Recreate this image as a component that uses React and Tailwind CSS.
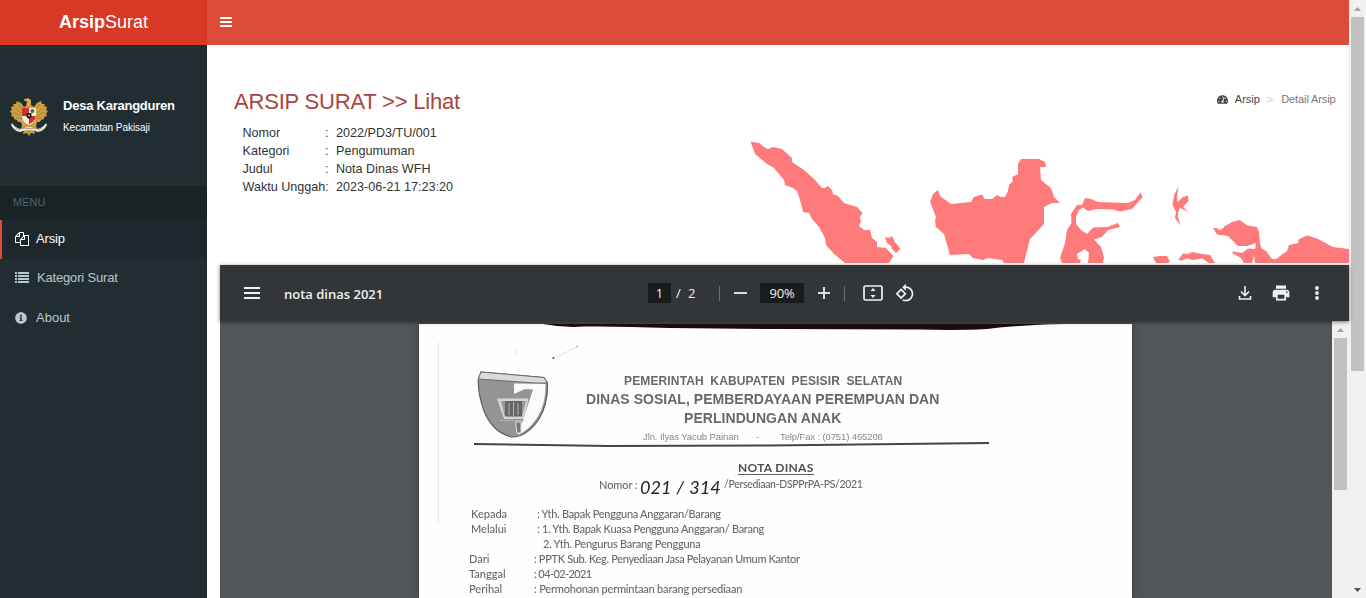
import React from "react";
import { FaTachometerAlt, FaInfoCircle } from "react-icons/fa";

function Bars() {
  return (
    <svg className="h-[10px] w-[12px] -translate-y-px" viewBox="0 0 12 10" fill="currentColor">
      <rect y="0" width="12" height="2" rx=".4" />
      <rect y="4" width="12" height="2" rx=".4" />
      <rect y="8" width="12" height="2" rx=".4" />
    </svg>
  );
}

function Files() {
  return (
    <svg className="size-[14px]" viewBox="0 0 1792 1792" fill="currentColor">
      <path d="M1696 384q40 0 68 28t28 68v1216q0 40-28 68t-68 28h-960q-40 0-68-28t-28-68v-288h-544q-40 0-68-28t-28-68v-672q0-40 20-88t48-76l408-408q28-28 76-48t88-20h416q40 0 68 28t28 68v328q68-40 128-40h416zm-544 213l-299 299h299v-299zm-640-384l-299 299h299v-299zm196 647l316-316v-416h-384v416q0 40-28 68t-68 28h-416v640h512v-256q0-40 20-88t48-76zm956 804v-1152h-384v416q0 40-28 68t-68 28h-416v640h896z" />
    </svg>
  );
}

function ListIcon() {
  return (
    <svg className="h-[11px] w-[14px]" viewBox="0 0 14 11" fill="currentColor">
      {[0, 3, 6, 9].map((y) => (
        <g key={y}>
          <rect x="0" y={y} width="2" height="2" />
          <rect x="3" y={y} width="11" height="2" />
        </g>
      ))}
    </svg>
  );
}

function Garuda() {
  return (
    <svg className="h-[40px] w-[40px] shrink-0" viewBox="0 0 40 40">
      <path d="M15 10 L12 6 L8 4 L7 7 L4 7 L5 9 L2 10 L3 13 L1 14 L3 17 L2 19 L5 20 L5 22 L8 23 L9 25 L12 25 L13 29 L12 33 L15 33 L14 37 L18 36 L20 39 L22 36 L26 37 L25 33 L28 33 L27 29 L28 25 L31 25 L32 23 L35 22 L35 20 L38 19 L37 17 L39 14 L37 13 L38 10 L35 9 L36 7 L33 7 L32 4 L28 6 L25 10 L22 8 L22 3 L19 1 L15 3 L18 5 L17 9 Z" fill="#cda043" />
      <path d="M5 10 L12 16 M4 15 L12 19 M7 21 L13 22 M9 7 L14 13 M35 10 L28 16 M36 15 L28 19 M33 21 L27 22 M31 7 L26 13 M20 29 L20 37 M17 29 L16 35 M23 29 L24 35" stroke="#8a6128" strokeWidth=".5" />
      <path d="M15 3 L19 2 L21 5 L19 9" fill="none" stroke="#e9bd58" strokeWidth="1" />
      <path d="M13 11 H27 V20 Q26 26 20 28 Q14 26 13 20 Z" fill="#f0e9e0" />
      <path d="M13 11 H20 V19 H13 Z M20 19 H27 Q26 25 20 27 Z" fill="#d22f2b" />
      <path d="M20 11 H27 V19 H20 Z" fill="#eee" />
      <circle cx="23.5" cy="14" r="2" fill="#49734a" />
      <path d="M17.500 16 H22.500 V20 L20 22 L17.500 20 Z" fill="#1c1714" />
      <circle cx="20" cy="18.500" r=".9" fill="#e3b94c" />
      <path d="M3 26 Q6 31 12 32 Q20 28 28 32 Q34 31 37 26 L38 28 Q35 34 29 35 Q20 31 11 35 Q5 34 2 28 Z" fill="#ebe6e2" />
      <path d="M7 31 L11 33 M16 31.500 H24 M29 33 L33 31" stroke="#777" strokeWidth=".6" />
      <path d="M12 31.500 L16 30.500 M24 30.500 L28 31.500" stroke="#bd8f38" strokeWidth="1.500" />
    </svg>
  );
}

function IslandMap() {
  return (
    <svg className="absolute left-[543px] top-[85px] h-[133px] w-[599px]" viewBox="750 130 599 133" fill="#ff7b7b">
      <path d="M750.5 141.5 L759 143 L764 147 L768 149 L773 147 L782 149 L792 158 L792 162 L804 170 L815 180 L822 188 L825 188 L828 186 L832 190 L833 194 L838 196 L844 203 L857 207 L862.500 213 L860 217 L861 222 L859 226 L864 230 L870 230 L872 238 L877 242 L877 247 L886 248 L893.500 256 L889 263 L845 263 L834 254 L826 245 L825 238 L819 227 L812 219 L809 213 L803 212 L801 203 L797 191 L793 188 L785 185 L784 180 L774 168 L767 164 L755 154 Z" />
      <path d="M885 237 L889 238 L892 236 L895 242 L900.500 249 L896 253 L892 249 L891 246 L887 243 Z" />
      <path d="M930 202 L933 194 L938 190 L940 196 L951 204 L971 202 L974 197 L980 195 L983 195 L984 199 L992 199 L997 195 L1001 197 L1005 197 L1008 191 L1009 185 L1013 181 L1012 177 L1018 174 L1018 164 L1021 159 L1039 159 L1045 162 L1046 167 L1040 167 L1041 180 L1051 188 L1054 197 L1060 203 L1052 203 L1044 207 L1044 224 L1030 239 L1024 263 L1004 263 L1002 260 L988 258 L983 260 L973 258 L969 254 L950 255 L944 234 L936 227 L935 221 L936 217 Z" />
      <path d="M1062 263 L1060 258 L1065 243 L1067 230 L1071.500 223 L1071 214 L1077 205 L1082 205 L1085 198 L1091 199 L1098 202 L1128 203 L1135 200 L1140.500 192.500 L1142.700 197 L1132 209 L1120 211.500 L1113 209.500 L1097 209 L1088 211 L1083 207.500 L1079 210 L1076 217 L1076 224 L1081 230 L1087 234 L1093 227.500 L1107 227 L1118 223 L1120 227 L1108 230 L1102 237 L1094 239.500 L1101 247 L1104 257 L1103 263 L1088 263 L1089 253 L1085 249 L1077 254 L1078 259 L1081 260 L1080 263 Z" />
      <path d="M1178.500 186.500 L1174 195 L1172.500 205 L1176 212 L1175 218 L1180.500 225.500 L1178 217 L1178 212 L1180 208 L1188.500 212 L1183 207 L1188.500 201 L1188 195.500 L1183 197 L1177.500 202 L1177 197 Z" />
      <path d="M1213 228 L1217 228 L1219 230 L1222 229 L1225 226 L1232 222 L1240 220 L1247 225.500 L1257 227 L1259 232 L1260 244 L1262 249 L1266 251 L1272 259 L1276 259 L1287 251 L1289 245 L1298 243 L1299 239 L1307 235.500 L1317 238.500 L1333 247 L1349 249 V263 H1255 L1254 255 L1252 263 H1244 L1241 258 L1232 253 L1233 251.500 L1242 253 L1248 248.500 L1255 249 L1256 243 L1247 246 L1238 246 L1228 236 L1217 234.500 Z" />
      <path d="M1153 257 L1160 256 L1167 256 L1170 262 L1167 263 H1156 Z M1178 260 L1183 253.500 L1188 254 L1192 252 L1202 254 L1210 255 L1215 263 H1209 L1202 258.500 L1193 260 L1187 258.500 L1182 260.500 Z" />
    </svg>
  );
}

function Crest() {
  return (
    <svg className="absolute left-[58px] top-[46px] h-[69px] w-[74px] blur-[0.3px]" viewBox="0 0 74 69">
      <path d="M4 2 L67 7.500 L70.500 13 Q71 34 62 49 Q50 67 35 67 Q16 63 7 41 Q1 24 1.300 9.500 Z" fill="#959393" stroke="#5d5b5b" strokeWidth="1.200" />
      <path d="M4 2 L67 7.500 L70.500 13 L59 13 L1.300 9 Z" fill="#dcdada" stroke="#6a6868" strokeWidth=".9" />
      <path d="M37 13.500 L68.500 14 Q69 34 60 48 Q52 60 41 65 L46 50 L56 19.500 L48 19 L37 24 Z" fill="#fafafa" />
      <path d="M20 28.500 H51.500 L47 49 H27 Z" fill="#d6d4d4" />
      <path d="M24 31 H49 L45 47 H28 Z" fill="#999" />
      <path d="M28 31 H45 V46 H28 Z" fill="#666" />
      <path d="M23 50.500 H47 M32 33 V45 M36.500 32 V46 M41 33 V45" stroke="#b5b3b3" strokeWidth="1" />
      <path d="M38.500 52 H44 V63 H40 Z" fill="#777" stroke="#e5e5e5" />
    </svg>
  );
}

function ScanLine({ className, children }) {
  return <div className={"flex whitespace-pre " + className}>{children}</div>;
}

function Scan() {
  return (
    <div className="relative ml-[199px] h-[274px] w-[713px] overflow-hidden bg-[#fefefe] text-[#6c6767] shadow-[0_0_6px_#2228]">
      <svg className="absolute left-0 top-0 h-[274px] w-[713px]" viewBox="0 0 713 274">
        <path d="M124 0 H645 Q600 1 568 5 Q540 6.500 500 5.500 L356 5 L250 4 Q200 2 165 2.500 Q145 4 124 0 Z" fill="#21090d" />
        <path d="M19.500 18 V200" stroke="#eee6e8" strokeWidth="1" />
        <path d="M137 33 L158 23" stroke="#e4d8d8" strokeWidth=".8" />
        <circle cx="134.500" cy="34" r="1" fill="#444" />
        <circle cx="158" cy="22.500" r=".8" fill="#a88" />
        <circle cx="97" cy="28" r=".7" fill="#cbb" />
        <path d="M55 120 L190 122 L350 121.500 L570 119" fill="none" stroke="#494346" strokeWidth="2" />
      </svg>
      <Crest />
      <div className="flex flex-col font-['Liberation_Sans',sans-serif] blur-[0.35px]">
        <ScanLine className="mt-[49px] h-[17px] pl-[205px] text-[12px] font-bold leading-[17px] tracking-[0.14px] [word-spacing:3px]">
          <span>PEMERINTAH KABUPATEN PESISIR SELATAN</span>
        </ScanLine>
        <ScanLine className="h-[19px] pl-[167px] text-[14px] font-bold leading-[19px] tracking-[0.03px]">
          <span>DINAS SOSIAL, PEMBERDAYAAN PEREMPUAN DAN</span>
        </ScanLine>
        <ScanLine className="h-[19px] pl-[265px] text-[14px] font-bold leading-[19px] tracking-[0.05px]">
          <span>PERLINDUNGAN ANAK</span>
        </ScanLine>
        <ScanLine className="h-[17px] pl-[224px] text-[9.5px] leading-[17px] text-[#888]">
          <span className="w-[113px] tracking-[-0.1px]">Jln. Ilyas Yacub Painan</span>
          <span className="w-[24px]">-</span>
          <span className="tracking-[-0.12px]">Telp/Fax : (0751) 465208</span>
        </ScanLine>
      </div>
      <div className="flex flex-col font-[Lato,sans-serif] text-[11px] font-medium blur-[0.3px]">
        <ScanLine className="mt-[15px] h-[18px] pl-[319px] text-[12px] font-bold leading-[15px] tracking-[0.28px] text-[#524d4d]">
          <span className="h-[15px] border-b border-[#625d5d]">NOTA DINAS</span>
        </ScanLine>
        <ScanLine className="h-[28px] pl-[180px] leading-[14px]">
          <span className="w-[41px] tracking-[-0.1px]">Nomor :</span>
          <span className="w-[84px] text-[18px] font-normal italic leading-[19px] text-[#222] [word-spacing:1px]">021 / 314</span>
          <span className="text-[10.5px] leading-[12px] tracking-[-0.32px]">/Persediaan-DSPPrPA-PS/2021</span>
        </ScanLine>
        <ScanLine className="h-[15px] pl-[52px] leading-[15px]"><span className="w-[66px]">Kepada</span><span className="tracking-[-0.3px]">: Yth. Bapak Pengguna Anggaran/Barang</span></ScanLine>
        <ScanLine className="h-[15px] pl-[52px] leading-[15px]"><span className="w-[66px]">Melalui</span><span className="tracking-[-0.3px]">: 1. Yth. Bapak Kuasa Pengguna Anggaran/ Barang</span></ScanLine>
        <ScanLine className="h-[15px] pl-[124px] leading-[15px]"><span className="tracking-[-0.25px]">2. Yth. Pengurus Barang Pengguna</span></ScanLine>
        <ScanLine className="h-[15px] pl-[50px] leading-[15px]"><span className="w-[65px]">Dari</span><span className="tracking-[-0.34px]">: PPTK Sub. Keg. Penyediaan Jasa Pelayanan Umum Kantor</span></ScanLine>
        <ScanLine className="h-[15px] pl-[50px] leading-[15px]"><span className="w-[65px]">Tanggal</span><span className="tracking-[-0.6px]">: 04-02-2021</span></ScanLine>
        <ScanLine className="h-[15px] pl-[50px] leading-[15px]"><span className="w-[65px]">Perihal</span><span className="tracking-[-0.2px]">: Permohonan permintaan barang persediaan</span></ScanLine>
      </div>
    </div>
  );
}

function PdfToolbar() {
  return (
    <div className="relative z-10 flex h-[56px] shrink-0 items-center bg-[#323639] font-['Open_Sans',sans-serif] text-[13px] text-[#f1f1f1] shadow-[0_1px_4px_#0008]">
      <svg className="ml-[24px] h-[12px] w-[16px]" viewBox="0 0 16 12" fill="currentColor"><path d="M0 0H16V2H0ZM0 5H16V7H0ZM0 10H16V12H0Z" /></svg>
      <span className="ml-[24px] w-[364px] translate-y-px whitespace-nowrap pt-[2px] font-semibold">nota dinas 2021</span>
      <span className="grid h-[20px] w-[23px] place-items-center bg-[#191b1c] leading-[20px]">1</span>
      <span className="ml-[5px] w-[7px] pt-px">/</span>
      <span className="ml-[5px] w-[31px] pt-px">2</span>
      <span className="h-[15px] w-px bg-[#6b6e70]" />
      <span className="ml-[14px] h-[2px] w-[13px] bg-[#ddd]" />
      <span className="ml-[13px] grid h-[20px] w-[44px] place-items-center bg-[#191b1c] leading-[20px] tracking-[-0.2px]">90%</span>
      <svg className="ml-[14px] size-[12px]" viewBox="0 0 12 12" fill="#ddd"><path d="M5 0H7V5H12V7H7V12H5V7H0V5H5Z" /></svg>
      <span className="ml-[14px] h-[15px] w-px bg-[#6b6e70]" />
      <svg className="ml-[18px] h-[16px] w-[20px]" viewBox="0 0 20 16"><rect x="1" y="1" width="18" height="14" rx="1.500" fill="none" stroke="#f1f1f1" strokeWidth="1.700" /><path d="M10 3 L12.500 6 H7.500Z M7.500 10 H12.500 L10 13Z" fill="#f1f1f1" /></svg>
      <svg className="ml-[12px] size-[20px]" viewBox="0 0 24 24" fill="#f1f1f1"><path d="M7.340 6.410L.86 12.900l6.490 6.480 6.490-6.480-6.500-6.490zM3.690 12.900l3.660-3.660L11 12.900l-3.660 3.660-3.650-3.660zm15.670-6.260C17.610 4.880 15.300 4 13 4V.76L8.760 5 13 9.240V6c1.790 0 3.580.68 4.950 2.050 2.730 2.730 2.730 7.170 0 9.900C16.580 19.320 14.790 20 13 20c-.97 0-1.940-.21-2.840-.61l-1.490 1.490C10.020 21.620 11.510 22 13 22c2.300 0 4.610-.88 6.360-2.640 3.520-3.510 3.520-9.210 0-12.720z" /></svg>
      <svg className="ml-auto size-[20px]" viewBox="0 0 20 20" fill="none" stroke="#f1f1f1" strokeWidth="1.600"><path d="M10 3V12M6 8.500L10 12.500L14 8.500M4.500 13V16H15.500V13" /></svg>
      <svg className="ml-[16px] size-[20px]" viewBox="0 0 24 24" fill="#f1f1f1"><path d="M19 8H5c-1.660 0-3 1.340-3 3v6h4v4h12v-4h4v-6c0-1.660-1.340-3-3-3zm-3 11H8v-5h8v5zm3-7c-.55 0-1-.45-1-1s.45-1 1-1 1 .45 1 1-.45 1-1 1zm-1-9H6v4h12V3z" /></svg>
      <svg className="ml-[16px] mr-[22px] size-[20px]" viewBox="0 0 20 20" fill="#f1f1f1"><circle cx="10" cy="5" r="1.900" /><circle cx="10" cy="10" r="1.900" /><circle cx="10" cy="15" r="1.900" /></svg>
    </div>
  );
}

function Arrow({ down }) {
  return (
    <svg className="h-[17px] w-full shrink-0" viewBox="0 0 17 17" fill={down ? "#505050" : "#a3a3a3"}>
      <path d={down ? "M5 7H12L8.500 11Z" : "M5 11H12L8.500 7Z"} />
    </svg>
  );
}

function Detail({ label, value }) {
  return (
    <div className="flex h-[18px] leading-[18px]">
      <span className="w-[82.5px] whitespace-nowrap">{label}</span>
      <span className="w-[11px]">:</span>
      <span>{value}</span>
    </div>
  );
}

export default function App() {
  return (
    <div className="flex h-[598px] w-[1366px] overflow-hidden bg-white font-['Liberation_Sans',sans-serif]">
      <aside className="flex w-[207px] shrink-0 flex-col bg-[#222d32]">
        <div className="flex h-[45px] items-center justify-center bg-[#d73925] text-[18px] text-white">
          <span><b>Arsip</b>Surat</span>
        </div>
        <div className="flex h-[141px] pl-[9px] pt-[52px] text-white">
          <Garuda />
          <div className="ml-[14px] flex flex-col whitespace-nowrap">
            <span className="text-[13px] font-bold leading-[17px] tracking-[-0.24px]">Desa Karangduren</span>
            <span className="mt-[8px] text-[10px] leading-[12px] tracking-[-0.05px]">Kecamatan Pakisaji</span>
          </div>
        </div>
        <div className="flex h-[34px] items-center bg-[#1a2226] pb-[2px] pl-[13px] text-[11px] text-[#4b646f]">MENU</div>
        <nav className="flex flex-col text-[13px] text-[#b8c7ce]">
          <a className="flex h-[39px] items-center gap-[7px] border-l-2 border-[#dd4b39] bg-[#1e282c] pb-[2px] pl-[13px] tracking-[-0.15px] text-white"><Files /><span>Arsip</span></a>
          <a className="flex h-[39px] items-center gap-[8px] pb-[2px] pl-[15px] tracking-[-0.17px]"><ListIcon /><span>Kategori Surat</span></a>
          <a className="flex h-[39px] items-center gap-[9px] pl-[15px]"><FaInfoCircle size={12} /><span>About</span></a>
        </nav>
      </aside>
      <main className="flex w-[1142px] shrink-0 flex-col">
        <header className="flex h-[45px] shrink-0 items-center bg-[#dd4b39] pl-[13px] text-white"><Bars /></header>
        <section className="relative flex h-[220px] shrink-0 justify-between">
          <IslandMap />
          <div className="ml-[27px] mt-[44px] flex flex-col">
            <h1 className="h-[35px] whitespace-nowrap text-[22px] leading-[26px] tracking-[-0.2px] text-[#a94442]">ARSIP SURAT &gt;&gt; Lihat</h1>
            <div className="flex flex-col pl-[8.5px] text-[12.6px] text-[#333]">
              <Detail label="Nomor" value="2022/PD3/TU/001" />
              <Detail label="Kategori" value="Pengumuman" />
              <Detail label="Judul" value="Nota Dinas WFH" />
              <Detail label="Waktu Unggah" value="2023-06-21 17:23:20" />
            </div>
          </div>
          <div className="mr-[13.5px] mt-[48px] flex h-[13px] items-center text-[11px] text-[#444]">
            <FaTachometerAlt size={11} />
            <span className="ml-[7px]">Arsip</span>
            <span className="ml-[7px] text-[#ccc]">&gt;</span>
            <span className="ml-[8px] tracking-[-0.12px] text-[#777]">Detail Arsip</span>
          </div>
        </section>
        <section className="ml-[13px] flex h-[333px] flex-col bg-[#525659]">
          <PdfToolbar />
          <div className="flex min-h-0 flex-1">
            <div className="w-[1112px] overflow-hidden pt-[3px]"><Scan /></div>
            <div className="flex w-[17px] flex-col bg-[#f1f1f1]">
              <Arrow />
              <div className="mx-[2px] h-[152px] bg-[#c1c1c1]" />
            </div>
          </div>
        </section>
      </main>
      <div className="flex w-[17px] flex-col bg-[#f1f1f1]">
        <Arrow />
        <div className="mx-[2px] h-[354px] bg-[#c1c1c1]" />
        <div className="mt-auto flex"><Arrow down /></div>
      </div>
    </div>
  );
}
